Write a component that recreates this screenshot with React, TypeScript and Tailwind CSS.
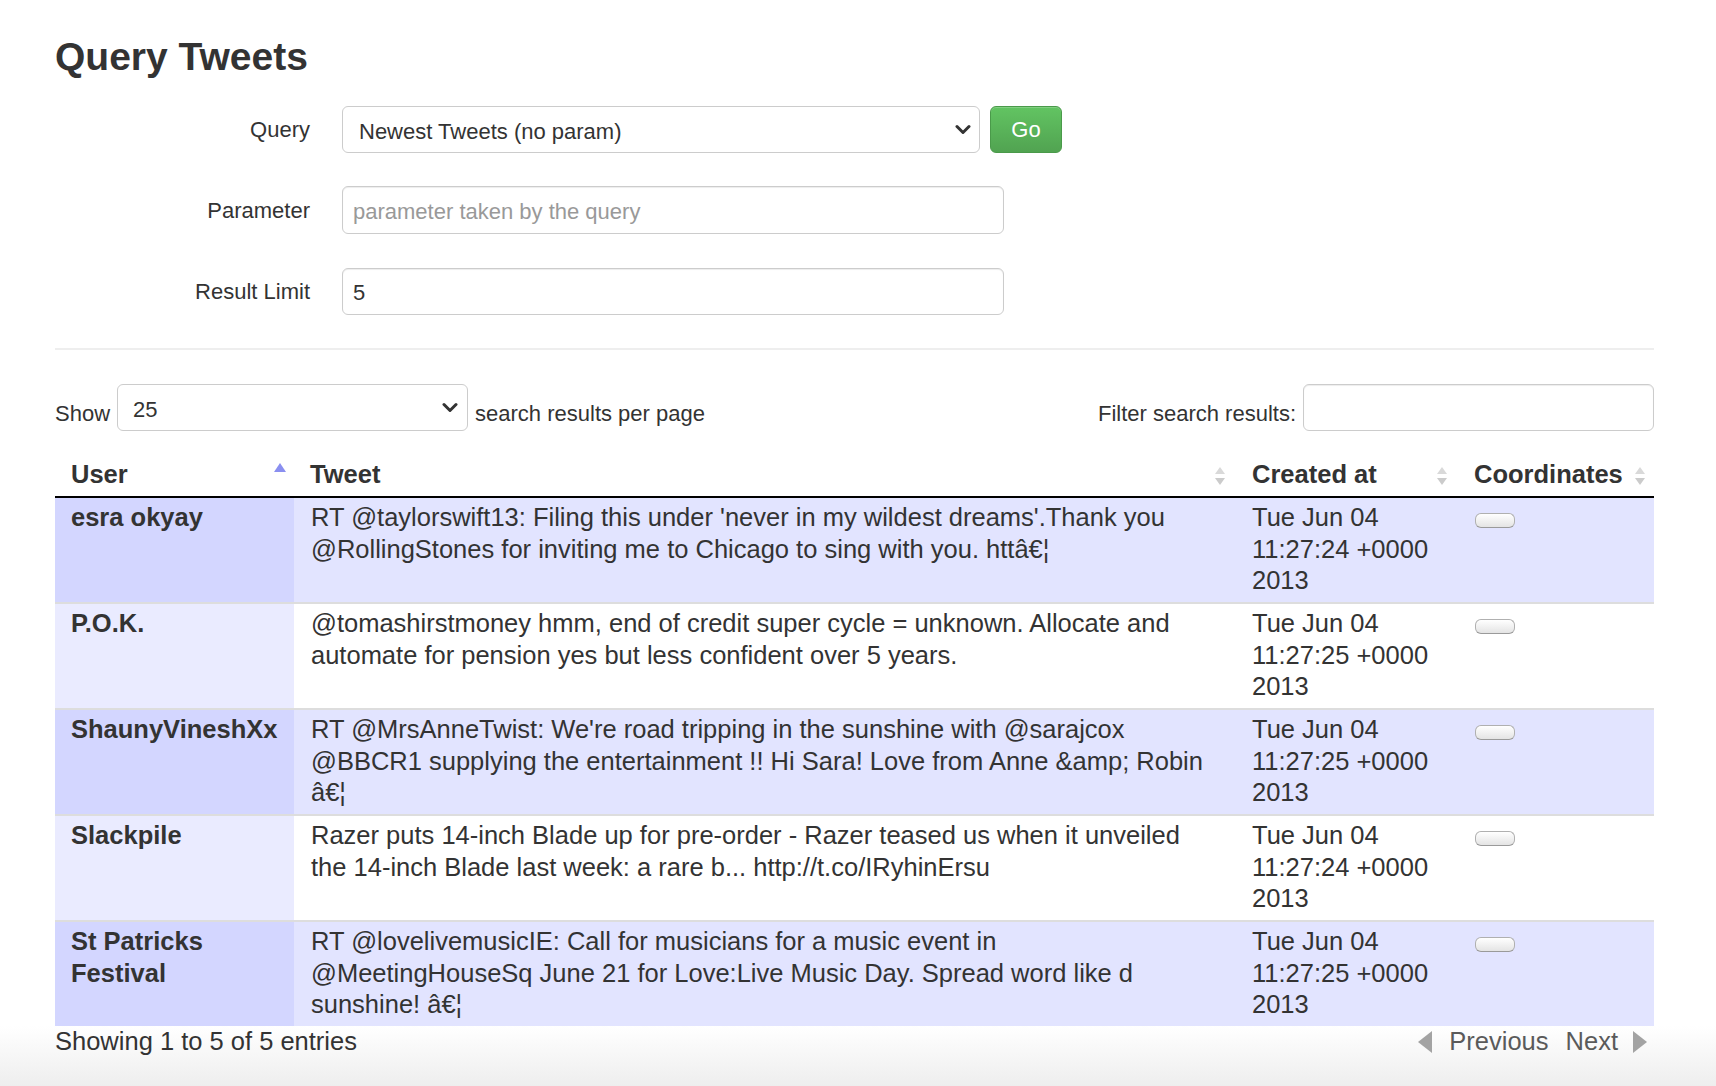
import React from "react";

const ELL = "\u00e2\u20ac\u00a6";

type Row = { user: string[]; tweet: string[]; created: string[] };

const rows: Row[] = [
  {
    user: ["esra okyay"],
    tweet: [
      "RT @taylorswift13: Filing this under 'never in my wildest dreams'.Thank you",
      "@RollingStones for inviting me to Chicago to sing with you. htt" + ELL,
    ],
    created: ["Tue Jun 04", "11:27:24 +0000", "2013"],
  },
  {
    user: ["P.O.K."],
    tweet: [
      "@tomashirstmoney hmm, end of credit super cycle = unknown. Allocate and",
      "automate for pension yes but less confident over 5 years.",
    ],
    created: ["Tue Jun 04", "11:27:25 +0000", "2013"],
  },
  {
    user: ["ShaunyVineshXx"],
    tweet: [
      "RT @MrsAnneTwist: We're road tripping in the sunshine with @sarajcox",
      "@BBCR1 supplying the entertainment !! Hi Sara! Love from Anne &amp; Robin",
      ELL,
    ],
    created: ["Tue Jun 04", "11:27:25 +0000", "2013"],
  },
  {
    user: ["Slackpile"],
    tweet: [
      "Razer puts 14-inch Blade up for pre-order - Razer teased us when it unveiled",
      "the 14-inch Blade last week: a rare b... http://t.co/IRyhinErsu",
    ],
    created: ["Tue Jun 04", "11:27:24 +0000", "2013"],
  },
  {
    user: ["St Patricks", "Festival"],
    tweet: [
      "RT @lovelivemusicIE: Call for musicians for a music event in",
      "@MeetingHouseSq June 21 for Love:Live Music Day. Spread word like d",
      "sunshine! " + ELL,
    ],
    created: ["Tue Jun 04", "11:27:25 +0000", "2013"],
  },
];

function Lines({ lines }: { lines: string[] }) {
  return (
    <>
      {lines.map((l, i) => (
        <React.Fragment key={i}>
          {i > 0 && <br />}
          {l}
        </React.Fragment>
      ))}
    </>
  );
}

function Chevron() {
  return (
    <svg width="16" height="11" viewBox="0 0 16 11" className="shrink-0">
      <path d="M2 2.5 L8 8.5 L14 2.5" fill="none" stroke="#333333" strokeWidth="3" strokeLinecap="round" strokeLinejoin="round" />
    </svg>
  );
}

function SortBoth() {
  return (
    <svg width="10" height="18" viewBox="0 0 10 18" className="shrink-0 mt-[2px]">
      <polygon points="5,0 10,7 0,7" fill="#d9d9d9" />
      <polygon points="0,11 10,11 5,18" fill="#cbcbcb" />
    </svg>
  );
}

function SortAsc() {
  return (
    <svg width="12" height="10" viewBox="0 0 12 10" className="shrink-0 self-start mt-[4px]">
      <polygon points="6,0 12,9 0,9" fill="#8a8ff0" />
    </svg>
  );
}

function Pill() {
  return (
    <div className="mt-[11px] w-[40px] h-[15px] rounded-[6px] border border-[#b0b0b0] border-b-[#9a9a9a] bg-gradient-to-b from-white to-[#e4e4e4]" />
  );
}

export default function App() {
  return (
    <div className="h-[1086px] overflow-hidden w-full bg-white text-[#333333] flex flex-col font-['Liberation_Sans',Arial,Helvetica,sans-serif]">
      <div className="pl-[55px] pr-[62px] pt-[35px]">
        <h1 className="text-[39px] leading-[44px] font-bold text-[#333333]">Query Tweets</h1>

        {/* Form */}
        <div className="mt-[27px] flex flex-col text-[22px]">
          <div className="flex items-center">
            <label className="w-[255px] text-right">Query</label>
            <div className="ml-[32px] w-[638px] h-[47px] rounded-[6px] border border-[#cccccc] bg-white flex items-center justify-between pl-[16px] pr-[8px]">
              <span className="pt-[3px]">Newest Tweets (no param)</span>
              <Chevron />
            </div>
            <button className="ml-[10px] w-[72px] h-[47px] rounded-[6px] border border-[#4a9a4a] bg-gradient-to-b from-[#62c462] to-[#51a351] text-white text-[22px] shadow-[inset_0_1px_0_rgba(255,255,255,0.2)]">
              Go
            </button>
          </div>

          <div className="mt-[33px] flex items-center">
            <label className="w-[255px] text-right">Parameter</label>
            <div className="ml-[32px] w-[662px] h-[48px] rounded-[6px] border border-[#cccccc] bg-white shadow-[inset_0_1px_1px_rgba(0,0,0,0.075)] flex items-center pl-[10px]">
              <span className="text-[#999999] pt-[2px]">parameter taken by the query</span>
            </div>
          </div>

          <div className="mt-[34px] flex items-center">
            <label className="w-[255px] text-right">Result Limit</label>
            <div className="ml-[32px] w-[662px] h-[47px] rounded-[6px] border border-[#cccccc] bg-white shadow-[inset_0_1px_1px_rgba(0,0,0,0.075)] flex items-center pl-[10px]">
              <span className="pt-[2px]">5</span>
            </div>
          </div>
        </div>

        <div className="mt-[33px] h-[2px] bg-[#eeeeee]" />

        {/* Show / filter */}
        <div className="mt-[34px] flex items-center justify-between text-[22px]">
          <div className="flex items-center">
            <span className="pt-[12px]">Show</span>
            <div className="ml-[7px] w-[351px] h-[47px] rounded-[6px] border border-[#cccccc] bg-white flex items-center justify-between pl-[15px] pr-[9px]">
              <span className="pt-[3px]">25</span>
              <Chevron />
            </div>
            <span className="ml-[7px] pt-[12px]">search results per page</span>
          </div>
          <div className="flex items-center">
            <span className="pt-[12px]">Filter search results:</span>
            <div className="ml-[7px] w-[351px] h-[47px] rounded-[6px] border border-[#cccccc] bg-white shadow-[inset_0_1px_1px_rgba(0,0,0,0.075)]" />
          </div>
        </div>

        {/* Table */}
        <table className="mt-[25px] w-full table-fixed text-[25.5px] leading-[31.5px]">
          <colgroup>
            <col className="w-[239px]" />
            <col className="w-[941px]" />
            <col className="w-[222px]" />
            <col className="w-[197px]" />
          </colgroup>
          <thead>
            <tr>
              <th className="pl-[16px] pr-[8px] pt-[3px] pb-[5px] text-left font-bold border-b-2 border-black">
                <div className="flex items-start justify-between">
                  <span>User</span>
                  <SortAsc />
                </div>
              </th>
              <th className="pl-[16px] pr-[10px] pt-[3px] pb-[5px] text-left font-bold border-b-2 border-black">
                <div className="flex items-center justify-between">
                  <span>Tweet</span>
                  <SortBoth />
                </div>
              </th>
              <th className="pl-[17px] pr-[10px] pt-[3px] pb-[5px] text-left font-bold border-b-2 border-black">
                <div className="flex items-center justify-between">
                  <span>Created at</span>
                  <SortBoth />
                </div>
              </th>
              <th className="pl-[17px] pr-[9px] pt-[3px] pb-[5px] text-left font-bold border-b-2 border-black">
                <div className="flex items-center justify-between">
                  <span className="whitespace-nowrap">Coordinates</span>
                  <SortBoth />
                </div>
              </th>
            </tr>
          </thead>
          <tbody>
            {rows.map((r, i) => {
              const odd = i % 2 === 0;
              const first = i === 0;
              const bt = first ? "" : "border-t-2 border-[#dddddd]";
              const userBg = odd ? "bg-[#d3d6ff]" : "bg-[#eaebff]";
              const cellBg = odd ? "bg-[#e2e4ff]" : "bg-white";
              return (
                <tr key={i}>
                  <td className={`${bt} ${userBg} align-top pl-[16px] pr-[6px] pt-[4.5px] pb-[5px] font-bold whitespace-nowrap`}>
                    <Lines lines={r.user} />
                  </td>
                  <td className={`${bt} ${cellBg} align-top pl-[17px] pr-[10px] pt-[4.5px] pb-[5px] whitespace-nowrap`}>
                    <Lines lines={r.tweet} />
                  </td>
                  <td className={`${bt} ${cellBg} align-top pl-[17px] pr-[6px] pt-[4.5px] pb-[5px] whitespace-nowrap`}>
                    <Lines lines={r.created} />
                  </td>
                  <td className={`${bt} ${cellBg} align-top pl-[18px] pr-[10px] pt-[4.5px] pb-[5px]`}>
                    <Pill />
                  </td>
                </tr>
              );
            })}
          </tbody>
        </table>
      </div>

      {/* Footer */}
      <div className="flex-1 bg-gradient-to-b from-white to-[#eeeeee]">
        <div className="pl-[55px] pr-[68px] flex items-start justify-between text-[25.5px] leading-[31.5px]">
          <span>Showing 1 to 5 of 5 entries</span>
          <div className="flex items-center text-[#5a5a5a]">
            <svg width="16" height="24" viewBox="0 0 16 24" className="mt-[2px]">
              <polygon points="15,1 15,23 1,12" fill="#a3a3a3" />
            </svg>
            <span className="ml-[16px]">Previous</span>
            <span className="ml-[17px]">Next</span>
            <svg width="16" height="24" viewBox="0 0 16 24" className="ml-[14px] mt-[2px]">
              <polygon points="1,1 1,23 15,12" fill="#a3a3a3" />
            </svg>
          </div>
        </div>
      </div>
    </div>
  );
}
